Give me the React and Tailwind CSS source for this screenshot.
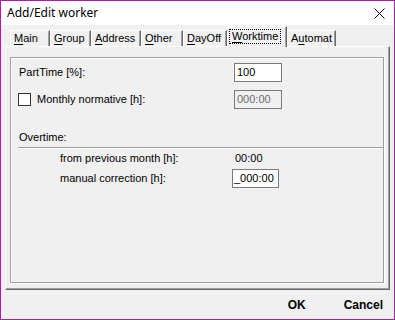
import React from "react";

const tabs = [
    { pre: "", key: "M", post: "ain", w: "w-[40px]" },
    { pre: "", key: "G", post: "roup", w: "w-[41px]" },
    { pre: "", key: "A", post: "ddress", w: "w-[50px]" },
    { pre: "", key: "O", post: "ther", w: "w-[42px]" },
    { pre: "", key: "D", post: "ayOff", w: "w-[44px]" },
    { pre: "", key: "W", post: "orktime", w: "w-[60px]", active: true },
    { pre: "A", key: "u", post: "tomat", w: "w-[49px]" },
];

const Tab = ({ tab }) => {
    const label = (
        <span>
            {tab.pre}
            <span className="underline underline-offset-[2px]">{tab.key}</span>
            {tab.post}
        </span>
    );
    if (tab.active) {
        return (
            <div className={`${tab.w} h-[21px] -mb-[1px] relative z-10 bg-[#f0f0f0] border-t border-l border-white border-r border-r-[#696969] shadow-[inset_-1px_0_0_#a0a0a0] pl-[1px] pt-[1px]`}>
                <div className="inline-block border border-dotted border-black px-[2px] leading-[13px]">{label}</div>
            </div>
        );
    }
    return (
        <div className={`${tab.w} h-[16px] bg-[#f0f0f0] border-t border-l border-white border-r border-r-[#696969] shadow-[inset_-1px_0_0_#a0a0a0] pl-[3px] leading-[15px]`}>
            {label}
        </div>
    );
};

const Field = ({ value, width = "w-[48px]", disabled = false, pad = "pl-[2px]" }) => (
    <div className={`${width} h-[19px] border border-[#7a7a7a] ${disabled ? "bg-[#f0f0f0] text-[#6d6d6d]" : "bg-white text-black"} ${pad} leading-[17px]`}>
        {value}
    </div>
);

export default function App() {
    return (
        <div className="w-[395px] h-[320px] border border-[#a2239f] bg-[#f0f0f0] flex flex-col text-[11px] text-black overflow-hidden" style={{ fontFamily: '"Liberation Sans", Arial, sans-serif' }}>
            {/* title bar */}
            <div className="h-[24px] bg-white flex items-center justify-between pl-[6px] pr-[9px] shrink-0">
                <span className="text-[12px]" style={{ fontFamily: '"Noto Sans", "Liberation Sans", sans-serif' }}>Add/Edit worker</span>
                <svg width="11" height="11" viewBox="0 0 11 11" className="mt-[1px]">
                    <path d="M0.5 0.5 L10.5 10.5 M10.5 0.5 L0.5 10.5" stroke="#000" strokeWidth="1" fill="none" />
                </svg>
            </div>

            {/* tab strip */}
            <div className="h-[21px] flex items-end pl-[9px] shrink-0">
                {tabs.map((t, i) => (
                    <Tab key={i} tab={t} />
                ))}
            </div>

            {/* tab panel */}
            <div className="ml-[4px] w-[385px] h-[244px] shrink-0 border-t border-l border-white border-r border-b border-r-[#696969] border-b-[#696969] shadow-[inset_-1px_-1px_0_#a0a0a0]">
                <div className="mt-[10px] ml-[4px] w-[374px] h-[226px] border border-[#a0a0a0] shadow-[inset_1px_1px_0_#fff,1px_1px_0_#fff] flex flex-col">
                    <div className="mt-[5px] h-[19px] flex items-center">
                        <div className="w-[223px] pl-[8px]">PartTime [%]:</div>
                        <Field value="100" />
                    </div>
                    <div className="mt-[8px] h-[19px] flex items-center">
                        <div className="w-[223px] pl-[7px] flex items-center">
                            <div className="w-[13px] h-[13px] border border-[#333] bg-white" />
                            <span className="ml-[6px]">Monthly normative [h]:</span>
                        </div>
                        <Field value="000:00" disabled />
                    </div>
                    <div className="mt-[20px] h-[17px] pl-[8px] leading-[17px]">Overtime:</div>
                    <div className="mt-[1px] ml-[7px] h-[2px] border-t border-[#a0a0a0] border-b border-b-white" />
                    <div className="h-[19px] flex items-center">
                        <div className="w-[221px] pl-[49px]">from previous month [h]:</div>
                        <div className="pl-[3px]">00:00</div>
                    </div>
                    <div className="mt-[1px] h-[19px] flex items-center">
                        <div className="w-[221px] pl-[49px]">manual correction [h]:</div>
                        <Field value="_000:00" width="w-[47px]" pad="pl-[1px]" />
                    </div>
                </div>
            </div>

            {/* buttons */}
            <div className="flex-1 flex items-center justify-end pr-[11px] gap-[38px] font-bold text-[12px]">
                <span>OK</span>
                <span>Cancel</span>
            </div>
        </div>
    );
}
